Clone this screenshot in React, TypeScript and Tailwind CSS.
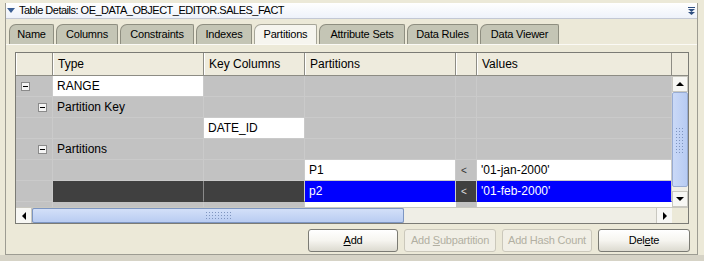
import React from "react";

const tabs = [
  { label: "Name", w: 45 },
  { label: "Columns", w: 62 },
  { label: "Constraints", w: 74 },
  { label: "Indexes", w: 56 },
  { label: "Partitions", w: 63, active: true },
  { label: "Attribute Sets", w: 86 },
  { label: "Data Rules", w: 71 },
  { label: "Data Viewer", w: 79 },
];

const cols = "grid grid-cols-[37px_151px_101px_151px_21px_195px]";

function Expander() {
  return (
    <span className="inline-flex items-center justify-center w-[9px] h-[9px] border border-[#8a8a8a] bg-[#f4f4f4]">
      <span className="block w-[5px] h-px bg-black" />
    </span>
  );
}

function Cell({
  children,
  className = "",
}: {
  children?: React.ReactNode;
  className?: string;
}) {
  return (
    <div
      className={
        "h-[21px] flex items-center pl-[4px] border-r border-b border-[#cacaca] whitespace-nowrap overflow-hidden " +
        className
      }
    >
      {children}
    </div>
  );
}

function Arrow({ dir }: { dir: "up" | "down" | "left" | "right" }) {
  const pts = {
    up: "1,5 9,5 5,1",
    down: "1,1 9,1 5,5",
    left: "5,1 5,9 1,5",
    right: "1,1 1,9 5,5",
  }[dir];
  const vert = dir === "up" || dir === "down";
  return (
    <svg width={vert ? 10 : 6} height={vert ? 6 : 10} viewBox={vert ? "0 0 10 6" : "0 0 6 10"}>
      <polygon points={pts} fill="#000" />
    </svg>
  );
}

function Grip({ vertical }: { vertical?: boolean }) {
  return (
    <div
      className={
        (vertical ? "w-[10px] h-[26px]" : "w-[26px] h-[10px]") +
        " bg-[radial-gradient(#7f95bf_0.9px,transparent_1px)] bg-[length:3px_3px]"
      }
    />
  );
}

function Button({
  children,
  disabled,
  w,
}: {
  children: React.ReactNode;
  disabled?: boolean;
  w: string;
}) {
  return (
    <div
      className={
        w +
        " h-[23px] rounded-[3px] border flex items-center justify-center text-[11px] tracking-[-0.2px] whitespace-nowrap " +
        (disabled
          ? "border-[#cbc8bb] bg-[#f1efe6] text-[#b2afa2]"
          : "border-[#7b7b74] bg-gradient-to-b from-white via-[#f6f5f0] to-[#dcdad0] text-black")
      }
    >
      {children}
    </div>
  );
}

export default function App() {
  return (
    <div className="w-[704px] h-[261px] bg-[#ece9d8] font-['Liberation_Sans',Arial,sans-serif] text-[12px] text-black overflow-hidden">
      <div className="pt-[3px] pl-[5px] pr-[6px]">
        <div className="h-[252px] border-l border-r border-b border-[#9d9c92] flex flex-col">
          {/* title bar */}
          <div className="h-[16px] flex items-center bg-gradient-to-b from-white to-[#eef2fa] border-b border-[#c3c8d4]">
            <svg width="8" height="6" viewBox="0 0 8 6" className="ml-[1px] mr-[4px]">
              <polygon points="0,0 8,0 4,5" fill="#3b5f94" />
            </svg>
            <span className="leading-none text-[11px] tracking-[-0.5px]">
              Table Details: OE_DATA_OBJECT_EDITOR.SALES_FACT
            </span>
            <svg width="7" height="8" viewBox="0 0 7 8" className="ml-auto mr-[2px]">
              <rect x="0" y="0" width="7" height="1" fill="#2f4f80" />
              <polygon points="0,2 7,2 3.5,5" fill="#2f4f80" />
              <polygon points="0,5 7,5 3.5,8" fill="#2f4f80" />
            </svg>
          </div>

          {/* tabs */}
          <div className="flex items-end gap-[2px] pl-[3px] mt-[5px] h-[20px]">
            {tabs.map((t) => (
              <div
                key={t.label}
                style={{ width: t.w }}
                className={
                  "h-[20px] flex items-center justify-center rounded-tl-[7px] rounded-tr-[2px] border border-b-0 text-[11px] tracking-[-0.2px] whitespace-nowrap " +
                  (t.active
                    ? "bg-[#f6f5ef] border-[#a6a598]"
                    : "bg-[#c4c5b5] border-[#8e8e80]")
                }
              >
                {t.label}
              </div>
            ))}
          </div>

          {/* content */}
          <div className="flex-1 border-t border-[#fbfaf5] pl-[9px] pt-[7px]">
            {/* table frame */}
            <div className="w-[674px] border border-[#7b7b75] bg-[#c2c2c2]">
              {/* header */}
              <div className="flex h-[23px] bg-[#eeebdd] border-b border-[#8d8c84]">
                <div className={cols}>
                  {["", "Type", "Key Columns", "Partitions", "", "Values"].map((h, i) => (
                    <div
                      key={i}
                      className="h-[22px] flex items-center pl-[4px] border-r border-[#8d8c84] border-l border-l-white"
                    >
                      {h}
                    </div>
                  ))}
                </div>
                <div className="w-[16px]" />
              </div>

              <div className="flex">
                {/* body */}
                <div className="flex flex-col">
                  <div className={cols}>
                    <Cell className="pl-[5px]"><Expander /></Cell>
                    <Cell className="bg-white">RANGE</Cell>
                    <Cell />
                    <Cell />
                    <Cell />
                    <Cell />

                    <Cell className="pl-[22px]"><Expander /></Cell>
                    <Cell>Partition Key</Cell>
                    <Cell />
                    <Cell />
                    <Cell />
                    <Cell />

                    <Cell />
                    <Cell />
                    <Cell className="bg-white">DATE_ID</Cell>
                    <Cell />
                    <Cell />
                    <Cell />

                    <Cell className="pl-[22px]"><Expander /></Cell>
                    <Cell>Partitions</Cell>
                    <Cell />
                    <Cell />
                    <Cell />
                    <Cell />

                    <Cell />
                    <Cell />
                    <Cell />
                    <Cell className="bg-white">P1</Cell>
                    <Cell className="pl-[5px] text-[10px] text-[#333]">&lt;</Cell>
                    <Cell className="bg-white">'01-jan-2000'</Cell>

                    <Cell />
                    <Cell className="bg-[#404040] border-r-[#8a8a8a] border-b-[#404040]" />
                    <Cell className="bg-[#404040] border-b-[#404040]" />
                    <Cell className="bg-[#0000ff] text-white border-b-[#0000ff]">p2</Cell>
                    <Cell className="bg-[#404040] pl-[5px] text-[10px] text-[#ddd] border-b-[#404040]">&lt;</Cell>
                    <Cell className="bg-[#0000ff] text-white border-b-[#0000ff]">'01-feb-2000'</Cell>
                  </div>
                  <div className={cols + " h-[5px] overflow-hidden"}>
                    <div className="border-r border-[#cacaca]" />
                    <div className="border-r border-[#cacaca]" />
                    <div className="border-r border-[#cacaca]" />
                    <div className="bg-white" />
                    <div className="border-r border-[#cacaca]" />
                    <div className="bg-white" />
                  </div>
                </div>

                {/* vertical scrollbar */}
                <div className="w-[16px] h-[131px] flex flex-col bg-[#f0efe8]">
                  <div className="h-[16px] flex items-center justify-center bg-[#f7f7f4] border border-[#c9c8c0]">
                    <Arrow dir="up" />
                  </div>
                  <div className="h-[95px] flex items-center justify-center bg-gradient-to-r from-[#cad9f7] to-[#b7cbf3] border border-[#98acd3] rounded-[2px]">
                    <Grip vertical />
                  </div>
                  <div className="flex-1" />
                  <div className="h-[16px] flex items-center justify-center bg-[#f7f7f4] border border-[#c9c8c0]">
                    <Arrow dir="down" />
                  </div>
                </div>
              </div>

              {/* horizontal scrollbar */}
              <div className="flex h-[16px] border-t border-[#c9c8c0]">
                <div className="w-[16px] flex items-center justify-center bg-[#f7f7f4] border-r border-[#c9c8c0]">
                  <Arrow dir="left" />
                </div>
                <div className="w-[372px] flex items-center justify-center bg-gradient-to-b from-[#d3e0f8] to-[#b9ccf2] border border-[#7d96c2] rounded-[2px]">
                  <Grip />
                </div>
                <div className="w-[252px] bg-[#efeee6]" />
                <div className="w-[16px] flex items-center justify-center bg-[#f7f7f4] border-l border-[#c9c8c0]">
                  <Arrow dir="right" />
                </div>
                <div className="flex-1 bg-[#ece9d8]" />
              </div>
            </div>

            {/* buttons */}
            <div className="flex gap-[6px] mt-[5px] ml-[293px]">
              <Button w="w-[90px]"><span><span className="underline">A</span>dd</span></Button>
              <Button w="w-[92px]" disabled><span>Add <span className="underline">S</span>ubpartition</span></Button>
              <Button w="w-[90px]" disabled>Add Hash Count</Button>
              <Button w="w-[92px]"><span>Del<span className="underline">e</span>te</span></Button>
            </div>
          </div>
        </div>
      </div>
      <div className="h-[6px] bg-[#d6d3c6]" />
    </div>
  );
}
